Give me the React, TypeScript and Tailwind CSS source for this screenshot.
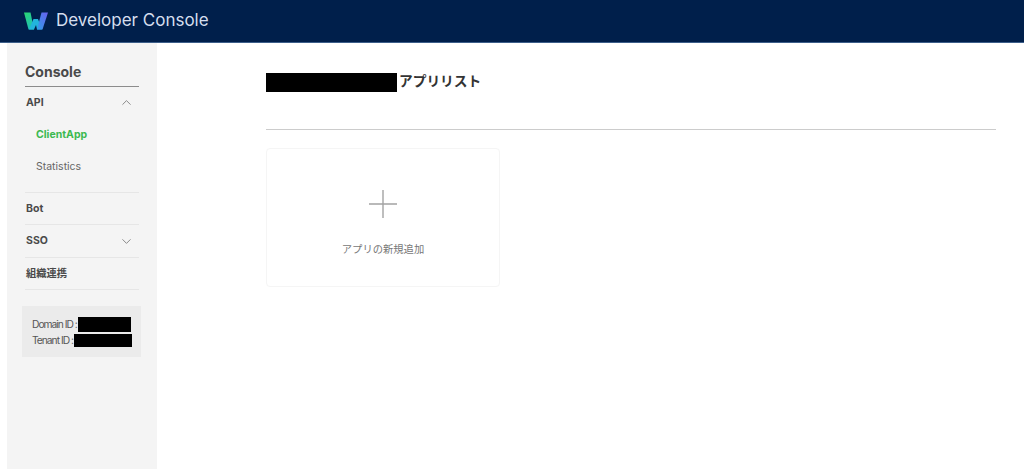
import { ChevronDown, ChevronUp } from "lucide-react"

const font = "font-['Inter','Noto_Sans_CJK_JP',sans-serif]"

const Logo = () => (
    <svg width="24" height="18" viewBox="0 0 24 18" fill="none">
        <defs>
            <linearGradient id="logoLeft" x1="0" y1="0" x2="0.6" y2="1">
                <stop offset="0" stopColor="#2ad66f" />
                <stop offset="1" stopColor="#1fc0b8" />
            </linearGradient>
            <linearGradient id="logoRight" x1="0" y1="1" x2="1" y2="0">
                <stop offset="0" stopColor="#2f9de8" />
                <stop offset="1" stopColor="#6a5ff0" />
            </linearGradient>
        </defs>
        <path d="M0 0.5 L6.5 0.5 L10 17.5 L4.5 17.5 Z" fill="url(#logoLeft)" />
        <path d="M5 17.5 L9.5 7 L14 7 L18 17.5 L13 17.5 L12 13 L10 17.5 Z" fill="#22b4dc" />
        <path d="M13 17.5 L17.5 0.5 L24 0.5 L18.5 17.5 Z" fill="url(#logoRight)" />
    </svg>
)

const App = () => {
    return (
        <div className={`w-[1024px] h-[469px] overflow-hidden bg-white flex flex-col ${font}`}>
            {/* Top bar */}
            <header className="h-[43px] shrink-0 bg-[#001f4b] border-b border-[#3d5f8a] flex items-center pl-[24px] gap-[8px]">
                <Logo />
                <span className="text-[17px] text-[#d5deee] font-normal">Developer Console</span>
            </header>

            <div className="flex flex-1 min-h-0">
                {/* Side menu */}
                <aside className="w-[150px] ml-[7px] shrink-0 bg-[#f4f4f4] flex flex-col pt-[20px]">
                    <div className="mx-[18px] h-[24px] border-b border-[#8c8c8c] text-[14px] leading-[18px] font-bold text-[#4a4a4a]">
                        Console
                    </div>
                    <div className="mx-[18px] flex flex-col">
                        <div className="h-[31px] flex items-center justify-between pl-[1px] pr-[5px] text-[10.5px] font-bold text-[#4a4a4a]">
                            API
                            <ChevronUp size={15} strokeWidth={1.2} className="text-[#666666]" />
                        </div>
                        <div className="h-[33px] flex items-center pt-[1px] pl-[11px] text-[10.5px] font-bold text-[#3cb950]">ClientApp</div>
                        <div className="h-[32px] flex items-center pl-[11px] text-[10.5px] text-[#666666]">Statistics</div>
                        <div className="h-[9px] border-b border-[#e6e6e6] box-content" />
                        <div className="h-[32px] flex items-center pl-[1px] border-b border-[#e6e6e6] text-[10.5px] font-bold text-[#4a4a4a]">Bot</div>
                        <div className="h-[33px] flex items-center justify-between pl-[1px] pr-[5px] border-b border-[#e6e6e6] text-[10.5px] font-bold text-[#4a4a4a]">
                            SSO
                            <ChevronDown size={15} strokeWidth={1.2} className="text-[#666666]" />
                        </div>
                        <div className="h-[32px] flex items-center pl-[1px] border-b border-[#e6e6e6] text-[10.25px] font-bold text-[#4a4a4a]">組織連携</div>
                    </div>
                    <div className="mt-[16px] mx-[15px] w-[119px] h-[51px] bg-[#ebebeb] flex flex-col justify-center gap-[2px] pl-[10px] text-[10.25px] leading-[13px] tracking-[-1px] text-[#555555]">
                        <div className="h-[15px] flex items-center">
                            Domain ID :<span className="w-[53px] h-[15px] ml-[1px] bg-black" />
                        </div>
                        <div className="h-[13px] flex items-center">
                            Tenant ID :<span className="w-[58px] h-[13px] ml-[1px] bg-black" />
                        </div>
                    </div>
                </aside>

                {/* Main content */}
                <main className="pl-[109px] pt-[30px] w-[839px]">
                    <div className="flex items-center h-[19px] gap-[2px]">
                        <span className="w-[131px] h-[19px] bg-black" />
                        <span className="text-[13.7px] leading-[17px] font-bold text-[#333333] -mt-[2px]">アプリリスト</span>
                    </div>
                    <div className="mt-[37px] h-[1px] bg-[#cccccc]" />
                    <div className="mt-[18px] w-[234px] h-[139px] border border-[#f5f5f5] rounded-[4px] flex flex-col items-center pt-[41px]">
                        <svg width="28" height="28" viewBox="0 0 28 28">
                            <path d="M14 0 V28 M0 14 H28" stroke="#a3a3a3" strokeWidth="1.4" />
                        </svg>
                        <span className="mt-[24px] text-[10.3px] text-[#777777]">アプリの新規追加</span>
                    </div>
                </main>
            </div>
        </div>
    )
}

export default App
